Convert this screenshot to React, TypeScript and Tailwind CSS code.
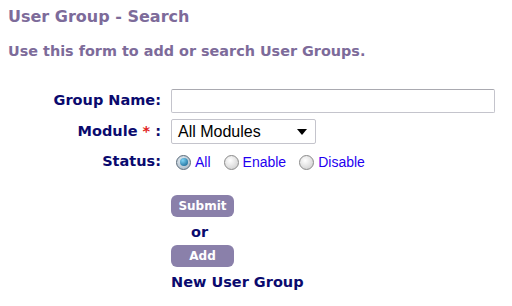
const label = "text-right text-[14.5px] font-bold text-[#0a0a6e]";

function Radio({ checked, text }: { checked?: boolean; text: string }) {
    return (
        <label className="flex items-center gap-[4px]">
            <span
                className={
                    "flex h-[15px] w-[15px] items-center justify-center rounded-full border " +
                    (checked
                        ? "border-[#5a6b7a] bg-[radial-gradient(circle_at_40%_35%,#e6eef4,#9fb0bf)]"
                        : "border-[#8a8a8a] bg-[radial-gradient(circle_at_40%_35%,#ffffff,#c8c8c8)]")
                }
            >
                {checked && (
                    <span className="h-[8px] w-[8px] rounded-full bg-[radial-gradient(circle_at_35%_30%,#7fd4f5,#0a5a8a)]" />
                )}
            </span>
            <span className="text-[14px] text-[#1f00f0]">{text}</span>
        </label>
    );
}

export default function App() {
    return (
        <main
            className="h-[306px] w-[512px] bg-white px-[8px] pt-[7px]"
            style={{ fontFamily: '"DejaVu Sans", Verdana, sans-serif' }}
        >
            <h1 className="text-[16px] font-bold leading-[20px] text-[#7d6b9a]">
                User Group - Search
            </h1>
            <p className="mt-[15px] text-[14.4px] font-bold leading-[18px] text-[#7d6b9a]">
                Use this form to add or search User Groups.
            </p>

            <div className="mt-[29px] grid grid-cols-[153px_1fr] items-center gap-x-[10px] gap-y-[6px]">
                <span className={label}>Group Name:</span>
                <input className="h-[24px] w-[324px] rounded-[2px] border border-[#c4c4cc] border-t-[#a9a9b0] px-1 outline-none" />

                <span className={label}>
                    Module <span className="text-[#e02020]">*</span> :
                </span>
                <div
                    className="flex h-[25px] w-[145px] items-center justify-between rounded-[2px] border border-[#c4c4cc] pl-[6px] pr-[8px] text-[16px] text-black"
                    style={{ fontFamily: '"Liberation Sans", Arial, sans-serif' }}
                >
                    All Modules
                    <svg width="10" height="6" viewBox="0 0 10 6">
                        <path d="M0 0h10L5 6z" fill="#000" />
                    </svg>
                </div>

                <span className={label}>Status:</span>
                <div
                    className="flex h-[24px] items-center gap-[13px] pl-[5px]"
                    style={{ fontFamily: '"Liberation Sans", Arial, sans-serif' }}
                >
                    <Radio checked text="All" />
                    <Radio text="Enable" />
                    <Radio text="Disable" />
                </div>
            </div>

            <div className="ml-[163px] mt-[21px] flex flex-col items-start">
                <button className="h-[22px] w-[63px] rounded-[6px] bg-[#8a80aa] text-[12px] font-bold text-white">
                    Submit
                </button>
                <span className="ml-[20px] mt-[7px] text-[14.5px] font-bold leading-[16px] text-[#0a0a6e]">
                    or
                </span>
                <button className="mt-[5px] h-[22px] w-[63px] rounded-[6px] bg-[#8a80aa] text-[12px] font-bold text-white">
                    Add
                </button>
                <span className="mt-[6px] text-[14.5px] font-bold leading-[18px] text-[#0a0a6e]">
                    New User Group
                </span>
            </div>
        </main>
    );
}
